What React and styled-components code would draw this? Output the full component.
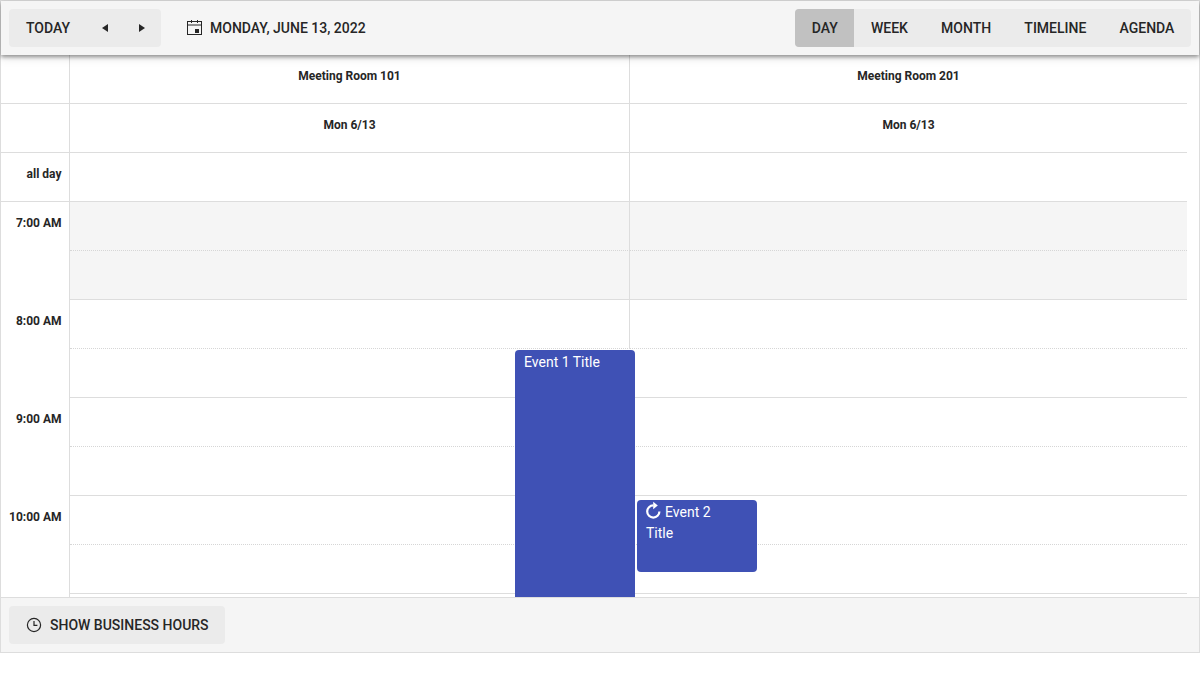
import React from 'react';
import styled, { createGlobalStyle } from 'styled-components';

const GlobalStyle = createGlobalStyle`
  * {
    box-sizing: border-box;
  }
  body {
    margin: 0;
    background: #fff;
    font-family: Roboto, "Liberation Sans", sans-serif;
    color: #262626;
  }
`;

const Scheduler = styled.div`
  width: 1200px;
  height: 653px;
  border: 1px solid #ddd;
  display: flex;
  flex-direction: column;
`;

const Toolbar = styled.div`
  height: 54px;
  flex: none;
  display: flex;
  align-items: center;
  padding: 0 8px;
  background: #f5f5f5;
  box-shadow: 0 2px 4px rgba(0, 0, 0, 0.4), 0 3px 10px rgba(0, 0, 0, 0.1);
  position: relative;
  z-index: 2;
`;

const ButtonGroup = styled.div`
  display: flex;
  height: 38px;
  border-radius: 4px;
  overflow: hidden;
  background: #ebebeb;
  margin-left: ${(props) => (props.$right ? 'auto' : '0')};
`;

const ToolButton = styled.div`
  display: flex;
  align-items: center;
  justify-content: center;
  height: 38px;
  padding: 0 ${(props) => props.$pad || 17}px;
  font-size: 14px;
  font-weight: 500;
  white-space: nowrap;
  background: ${(props) => (props.$active ? '#c1c1c1' : 'transparent')};
`;

const FooterButton = styled(ToolButton)`
  gap: 8px;
  padding: 0 16px 0 17px;
  border-radius: 4px;
  background: #ebebeb;
`;

const NavButton = styled.div`
  width: 37px;
  height: 38px;
  padding-right: 1px;
  display: flex;
  align-items: center;
  justify-content: center;
`;

const DateLabel = styled.div`
  display: flex;
  align-items: center;
  gap: 7px;
  margin-left: 24px;
  font-size: 14px;
  font-weight: 500;
  white-space: nowrap;
`;

const Scroller = styled.div`
  flex: 1;
  min-height: 0;
  overflow: hidden;
  padding-right: 12px;
  position: relative;
`;

const Row = styled.div`
  display: grid;
  grid-template-columns: 69px 560px 1fr;
  height: 49px;
`;

const TimeCell = styled.div`
  border-right: 1px solid #ddd;
  border-bottom: ${(props) => (props.$ruled ? '1px solid #ddd' : 'none')};
  padding: 14px 7.5px 0 0;
  text-align: right;
  font-size: 12px;
  line-height: 14px;
  font-weight: 700;
  white-space: nowrap;
`;

const Slot = styled.div`
  border-bottom: 1px ${(props) => (props.$dotted ? 'dotted #d6d6d6' : 'solid #ddd')};
  border-right: ${(props) => (props.$divider ? '1px solid #ddd' : 'none')};
  background: ${(props) => (props.$shaded ? '#f5f5f5' : '#fff')};
`;

const HeaderCell = styled.div`
  border-bottom: 1px solid #ddd;
  border-right: ${(props) => (props.$divider ? '1px solid #ddd' : 'none')};
  padding-top: 14px;
  text-align: center;
  font-size: 12px;
  line-height: 14px;
  font-weight: 700;
`;

const Event = styled.div`
  position: absolute;
  left: ${(props) => props.$left}px;
  top: ${(props) => props.$top}px;
  width: 120px;
  height: ${(props) => props.$height}px;
  padding: 2px 9px;
  border-radius: 4px;
  background: #3f51b5;
  color: #fff;
  font-size: 14px;
  line-height: 21px;
`;

const EventIcon = styled.svg`
  width: 16px;
  height: 16px;
  margin-right: 3px;
  vertical-align: -2px;
  overflow: visible;
`;

const Footer = styled.div`
  height: 55px;
  flex: none;
  display: flex;
  align-items: center;
  padding: 0 8px;
  background: #f5f5f5;
  border-top: 1px solid #ddd;
`;

const CalendarIcon = () => (
  <svg width="18" height="18" viewBox="0 0 18 18" fill="none" stroke="#262626">
    <rect x="2.5" y="2.5" width="14" height="13" />
    <path d="M2.5 6h14M6.5 1v3M12.5 1v3" />
    <rect x="10" y="10" width="4" height="4" fill="#262626" stroke="none" />
  </svg>
);

const ClockIcon = () => (
  <svg width="16" height="16" viewBox="0 0 16 16" fill="none" stroke="#262626" strokeWidth="1.2">
    <circle cx="8" cy="8" r="6.6" />
    <path d="M8 4v4.4h3.4" />
  </svg>
);

const RepeatIcon = () => (
  <EventIcon viewBox="0 0 16 16" fill="none" stroke="#fff" strokeWidth="2.2">
    <path d="M7.3 2.4a6.1 6.1 0 1 0 6.1 6.1" />
    <path d="M7.2 -1.2l4.6 3.7L7.2 6.2z" fill="#fff" stroke="none" />
  </EventIcon>
);

const Triangle = ({ dir }) => (
  <svg width="7" height="8" viewBox="0 0 7 8" fill="#262626">
    <path d={dir === 'left' ? 'M6 0v8L0 4z' : 'M0 0v8l6-4z'} />
  </svg>
);

const views = ['DAY', 'WEEK', 'MONTH', 'TIMELINE', 'AGENDA'];

const timeRows = [
  { time: '7:00 AM', shaded: true, divider: true, dotted: true },
  { shaded: true, divider: true },
  { time: '8:00 AM', divider: true, dotted: true },
  {},
  { time: '9:00 AM', dotted: true },
  {},
  { time: '10:00 AM', dotted: true },
  {},
  { time: '' },
];

export default function App() {
  return (
    <>
      <GlobalStyle />
      <Scheduler>
        <Toolbar>
          <ButtonGroup>
            <ToolButton>TODAY</ToolButton>
            <NavButton>
              <Triangle dir="left" />
            </NavButton>
            <NavButton>
              <Triangle dir="right" />
            </NavButton>
          </ButtonGroup>
          <DateLabel>
            <CalendarIcon />
            MONDAY, JUNE 13, 2022
          </DateLabel>
          <ButtonGroup $right>
            {views.map((view) => (
              <ToolButton key={view} $pad={16.6} $active={view === 'DAY'}>
                {view}
              </ToolButton>
            ))}
          </ButtonGroup>
        </Toolbar>
        <Scroller>
          <Row>
            <TimeCell $ruled />
            <HeaderCell $divider>Meeting Room 101</HeaderCell>
            <HeaderCell>Meeting Room 201</HeaderCell>
          </Row>
          <Row>
            <TimeCell $ruled />
            <HeaderCell $divider>Mon 6/13</HeaderCell>
            <HeaderCell>Mon 6/13</HeaderCell>
          </Row>
          <Row>
            <TimeCell $ruled>all day</TimeCell>
            <Slot $divider />
            <Slot />
          </Row>
          {timeRows.map((row, i) => (
            <Row key={i}>
              <TimeCell>{row.time}</TimeCell>
              <Slot $dotted={row.dotted} $shaded={row.shaded} $divider={row.divider} />
              <Slot $dotted={row.dotted} $shaded={row.shaded} />
            </Row>
          ))}
          <Event $left={514} $top={295} $height={300}>
            Event 1 Title
          </Event>
          <Event $left={636} $top={445} $height={72}>
            <RepeatIcon />
            Event 2
            <br />
            Title
          </Event>
        </Scroller>
        <Footer>
          <FooterButton>
            <ClockIcon />
            SHOW BUSINESS HOURS
          </FooterButton>
        </Footer>
      </Scheduler>
    </>
  );
}
